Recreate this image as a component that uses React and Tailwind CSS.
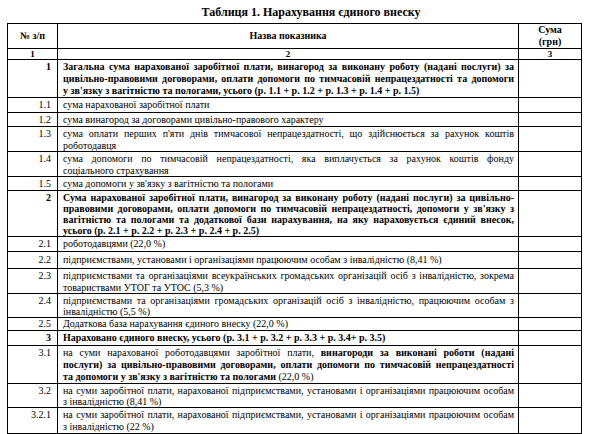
import React from "react";

const J = ({ children }) => (
  <div className="text-justify [text-align-last:justify]">{children}</div>
);

// h = row height, lead = line height, pt = top padding (all written out in full)
const rows = [
  {
    num: "1",
    bold: true,
    h: "h-[38px]",
    lead: "leading-[12px]",
    pt: "pt-px",
    lines: [
      "Загальна сума нарахованої заробітної плати, винагород за виконану роботу (надані послуги) за",
      "цивільно-правовими договорами, оплати допомоги по тимчасовій непрацездатності та допомоги",
      "у зв'язку з вагітністю та пологами, усього (р. 1.1 + р. 1.2 + р. 1.3 + р. 1.4 + р. 1.5)",
    ],
  },
  { num: "1.1", h: "h-[15px]", lead: "leading-[12px]", pt: "pt-px", lines: ["сума нарахованої заробітної плати"] },
  {
    num: "1.2",
    h: "h-[14px]",
    lead: "leading-[12px]",
    pt: "pt-px",
    lines: ["сума винагород за договорами цивільно-правового характеру"],
  },
  {
    num: "1.3",
    h: "h-[25px]",
    lead: "leading-[11.5px]",
    pt: "pt-px",
    lines: [
      "сума оплати перших п'яти днів тимчасової непрацездатності, що здійснюється за рахунок коштів",
      "роботодавця",
    ],
  },
  {
    num: "1.4",
    h: "h-[25px]",
    lead: "leading-[11.5px]",
    pt: "pt-px",
    lines: [
      "сума допомоги по тимчасовій непрацездатності, яка виплачується за рахунок коштів фонду",
      "соціального страхування",
    ],
  },
  {
    num: "1.5",
    h: "h-[14px]",
    lead: "leading-[12px]",
    pt: "pt-px",
    lines: ["сума допомоги у зв'язку з вагітністю та пологами"],
  },
  {
    num: "2",
    bold: true,
    h: "h-[46px]",
    lead: "leading-[11px]",
    pt: "pt-px",
    lines: [
      "Сума нарахованої заробітної плати, винагород за виконану роботу (надані послуги) за цивільно-",
      "правовими договорами, оплати допомоги по тимчасовій непрацездатності, допомоги у зв'язку з",
      "вагітністю та пологами та додаткової бази нарахування, на яку нараховується єдиний внесок,",
      "усього (р. 2.1 + р. 2.2 + р. 2.3 + р. 2.4 + р. 2.5)",
    ],
  },
  { num: "2.1", h: "h-[15px]", lead: "leading-[12px]", pt: "pt-px", lines: ["роботодавцями (22,0 %)"] },
  {
    num: "2.2",
    h: "h-[17px]",
    lead: "leading-[12px]",
    pt: "pt-[2px]",
    lines: ["підприємствами, установами і організаціями працюючим особам з інвалідністю (8,41 %)"],
  },
  {
    num: "2.3",
    h: "h-[25px]",
    lead: "leading-[11.5px]",
    pt: "pt-px",
    lines: [
      "підприємствами та організаціями всеукраїнських громадських організацій осіб з інвалідністю, зокрема",
      "товариствами УТОГ та УТОС (5,3 %)",
    ],
  },
  {
    num: "2.4",
    h: "h-[24px]",
    lead: "leading-[11px]",
    pt: "pt-px",
    lines: [
      "підприємствами та організаціями громадських організацій осіб з інвалідністю, працюючим особам з",
      "інвалідністю (5,5 %)",
    ],
  },
  {
    num: "2.5",
    h: "h-[13px]",
    lead: "leading-[12px]",
    pt: "pt-0",
    lines: ["Додаткова база нарахування єдиного внеску (22,0 %)"],
  },
  {
    num: "3",
    bold: true,
    h: "h-[15px]",
    lead: "leading-[12px]",
    pt: "pt-px",
    lines: ["Нараховано єдиного внеску, усього (р. 3.1 + р. 3.2 + р. 3.3 + р. 3.4+ р. 3.5)"],
  },
  {
    num: "3.1",
    h: "h-[38px]",
    lead: "leading-[12px]",
    pt: "pt-px",
    lines: [
      <>
        на суми нарахованої роботодавцями заробітної плати,{" "}
        <b>винагороди за виконані роботи (надані</b>
      </>,
      <b>послуги) за цивільно-правовими договорами, оплати допомоги по тимчасовій непрацездатності</b>,
      <>
        <b>та допомоги у зв'язку з вагітністю та пологами</b> (22,0 %)
      </>,
    ],
  },
  {
    num: "3.2",
    h: "h-[24px]",
    lead: "leading-[11px]",
    pt: "pt-px",
    lines: [
      "на суми заробітної плати, нарахованої підприємствами, установами і організаціями працюючим особам",
      "з інвалідністю (8,41 %)",
    ],
  },
  {
    num: "3.2.1",
    h: "h-[26px]",
    lead: "leading-[12px]",
    pt: "pt-px",
    lines: [
      "на суми заробітної плати, нарахованої підприємствами, установами і організаціями працюючим особам",
      "з інвалідністю (22 %)",
    ],
  },
  {
    num: "3.3",
    h: "h-[26px]",
    lead: "leading-[12px]",
    pt: "pt-px",
    lines: [
      "на суми заробітної плати, нарахованої підприємствами та організаціями всеукраїнських громадських",
      "організацій осіб з інвалідністю (5,3 %)",
    ],
  },
];

const App = () => {
  return (
    <div className="w-[592px] h-[434px] overflow-hidden bg-white text-black font-['Liberation_Serif',serif]">
      {/* Title */}
      <div className="h-[23px] pt-[5px] pl-[30px] text-center text-[12px] font-bold leading-[14px]">
        Таблиця 1. Нарахування єдиного внеску
      </div>

      <table className="ml-[7px] w-[574px] table-fixed border-collapse text-[10px]">
        <colgroup>
          <col className="w-[50px]" />
          <col className="w-[461px]" />
          <col className="w-[63px]" />
        </colgroup>
        <tbody>
          <tr className="leading-[12px]">
            <td className="h-[25px] border border-black text-center align-middle font-bold">№ з/п</td>
            <td className="border border-black text-center align-middle font-bold">Назва показника</td>
            <td className="border border-black text-center align-middle font-bold">
              Сума
              <br />
              (грн)
            </td>
          </tr>
          <tr className="text-[9px] leading-[10px] font-bold">
            <td className="h-[11px] border border-black p-0 text-center">1</td>
            <td className="border border-black p-0 text-center">2</td>
            <td className="border border-black p-0 text-center">3</td>
          </tr>
          {rows.map((row) => (
            <tr key={row.num} className={row.lead}>
              <td
                className={`${row.h} ${row.pt} border border-black pr-[6px] align-top text-right ${
                  row.bold ? "font-bold" : ""
                }`}
              >
                {row.num}
              </td>
              <td
                className={`${row.pt} border border-black pl-[5px] pr-[4px] align-top ${
                  row.bold ? "font-bold" : ""
                }`}
              >
                {row.lines.map((line, i) =>
                  i < row.lines.length - 1 ? (
                    <J key={i}>{line}</J>
                  ) : (
                    <div key={i}>{line}</div>
                  )
                )}
              </td>
              <td className="border border-black"></td>
            </tr>
          ))}
        </tbody>
      </table>
    </div>
  );
};

export default App;
